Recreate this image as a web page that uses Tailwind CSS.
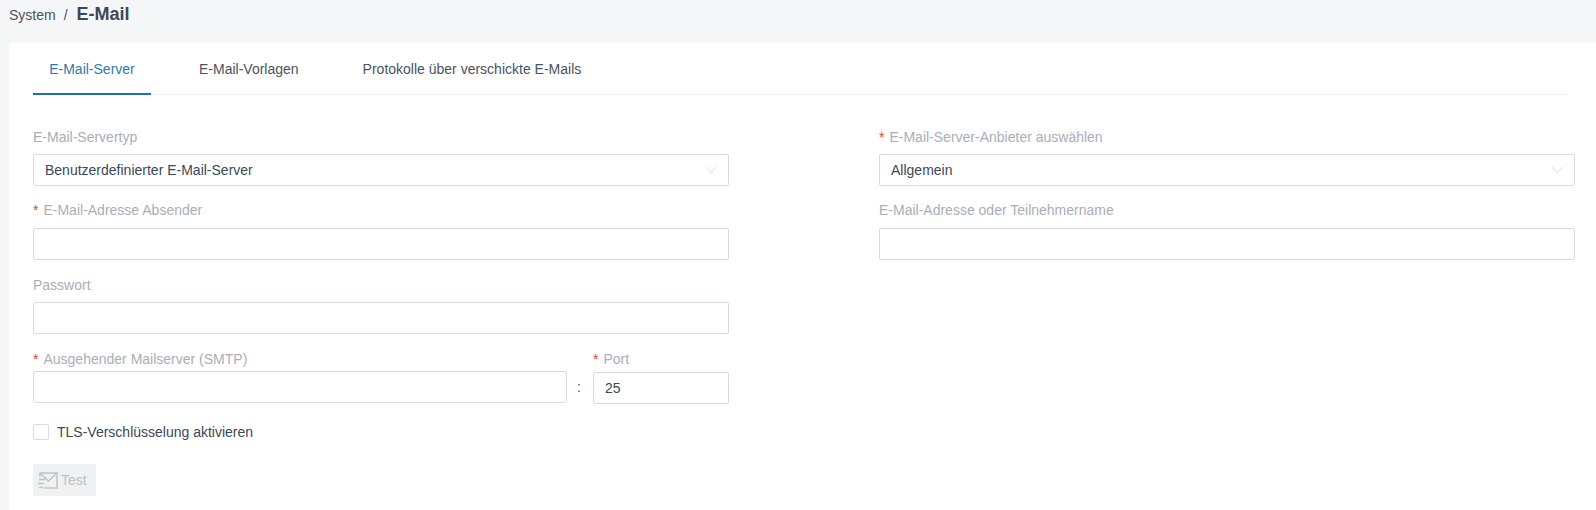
<!DOCTYPE html>
<html lang="de">
<head>
  <meta charset="UTF-8" />
  <title>E-Mail</title>
  <script src="https://cdn.jsdelivr.net/npm/@tailwindcss/browser@4"></script>
</head>
<body class="h-[510px] overflow-hidden bg-[#f5f6f8] font-['Liberation_Sans',Arial,sans-serif] text-[14px] text-[#3d4757]">
  <!-- Breadcrumb -->
  <div class="flex h-[43px] items-start pl-[9px] pt-[3px]">
    <span class="mt-[2px] leading-[20px] text-[#4a5260]">System</span>
    <span class="mx-[8px] mt-[2px] leading-[20px] text-[#4a5260]">/</span>
    <span class="ml-px text-[18px] font-bold leading-[22px] text-[#3d4757]">E-Mail</span>
  </div>

  <main class="ml-[9px] h-[467px] rounded-tl-[2px] bg-white pl-[24px]">
    <!-- Tabs -->
    <div class="mr-[27px] flex h-[52px] border-b border-[#eeeff1]">
      <div class="-mb-px flex h-[52px] w-[118px] items-center justify-center border-b-2 border-[#1f74a7] pt-[3px] text-[#2b7cac]">E-Mail-Server</div>
      <div class="flex h-[52px] items-center pl-[48px] pt-px text-[#4a5260]">E-Mail-Vorlagen</div>
      <div class="flex h-[52px] items-center pl-[64px] pt-px text-[#4a5260]">Protokolle über verschickte E-Mails</div>
    </div>

    <!-- Form -->
    <div class="mt-[32px] flex">
      <div class="w-[696px]">
        <label class="block h-[27px] leading-[20px] text-[#a9aeb8]">E-Mail-Servertyp</label>
        <div class="flex h-[32px] items-center justify-between rounded-[2px] border border-[#d8dbe0] pl-[11px] pr-[11px] text-[#3d4757]">
          <span>Benutzerdefinierter E-Mail-Server</span>
          <svg class="h-[10px] w-[12px]" viewBox="0 0 12 10" fill="none" stroke="#dcdfe4"><path d="M1 2l5 6 5-6"/></svg>
        </div>

        <label class="mt-[14px] block h-[28px] leading-[20px] text-[#a9aeb8]"><span class="mr-[5px] text-[#e8432e]">*</span>E-Mail-Adresse Absender</label>
        <div class="h-[32px] rounded-[2px] border border-[#d8dbe0]"></div>

        <label class="mt-[15px] block h-[27px] leading-[20px] text-[#a9aeb8]">Passwort</label>
        <div class="h-[32px] rounded-[2px] border border-[#d8dbe0]"></div>

        <div class="mt-[15px] flex">
          <div class="w-[534px]">
            <label class="block h-[22px] leading-[20px] text-[#a9aeb8]"><span class="mr-[5px] text-[#e8432e]">*</span>Ausgehender Mailserver (SMTP)</label>
            <div class="h-[32px] rounded-[2px] border border-[#d8dbe0]"></div>
          </div>
          <div class="flex w-[24px] items-end justify-center pb-[7px] leading-[20px] text-[#4a5260]">:</div>
          <div class="ml-[2px] w-[136px]">
            <label class="block h-[23px] leading-[20px] text-[#a9aeb8]"><span class="mr-[5px] text-[#e8432e]">*</span>Port</label>
            <div class="flex h-[32px] items-center rounded-[2px] border border-[#d8dbe0] pl-[11px] text-[#3d4757]">25</div>
          </div>
        </div>

        <label class="mt-[18px] flex items-center">
          <span class="h-[16px] w-[16px] rounded-[2px] border border-[#d8dbe0]"></span>
          <span class="ml-[8px] leading-[20px] text-[#3d4757]">TLS-Verschlüsselung aktivieren</span>
        </label>

        <button class="mt-[22px] flex h-[32px] w-[63px] items-center rounded-[2px] bg-[#f0f1f2] pl-[5px] text-[#bcc0c6]">
          <svg class="h-[17px] w-[20px]" viewBox="0 0 20 17" fill="none" stroke="#bfc2c7" stroke-width="1.5">
            <path d="M2 5V1h17v15H6"/>
            <path d="M2 1l8.5 8L19 1"/>
            <path d="M1 7.5h6M0 11.5h6M1 15.5h4" stroke-width="1.3"/>
          </svg>
          <span class="ml-[3px]">Test</span>
        </button>
      </div>

      <div class="ml-[150px] w-[696px]">
        <label class="block h-[27px] leading-[20px] text-[#a9aeb8]"><span class="mr-[5px] text-[#e8432e]">*</span>E-Mail-Server-Anbieter auswählen</label>
        <div class="flex h-[32px] items-center justify-between rounded-[2px] border border-[#d8dbe0] pl-[11px] pr-[11px] text-[#3d4757]">
          <span>Allgemein</span>
          <svg class="h-[10px] w-[12px]" viewBox="0 0 12 10" fill="none" stroke="#dcdfe4"><path d="M1 2l5 6 5-6"/></svg>
        </div>
        <label class="mt-[14px] block h-[28px] leading-[20px] text-[#a9aeb8]">E-Mail-Adresse oder Teilnehmername</label>
        <div class="h-[32px] rounded-[2px] border border-[#d8dbe0]"></div>
      </div>
    </div>
  </main>
</body>
</html>
